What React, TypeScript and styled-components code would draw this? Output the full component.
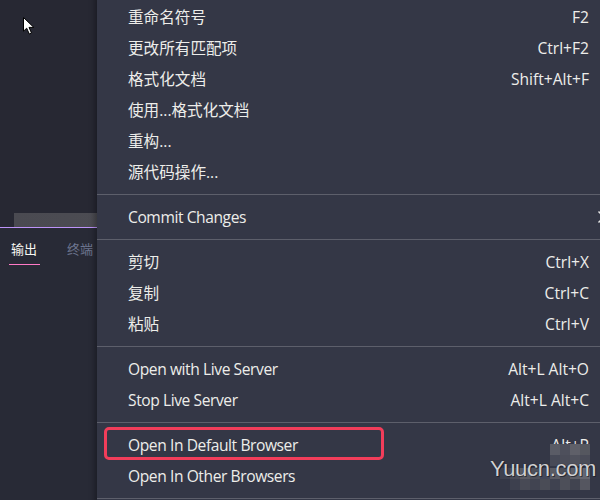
import React from "react";
import styled, { createGlobalStyle } from "styled-components";

const Global = createGlobalStyle`
  html, body { margin: 0; padding: 0; background: #282a36; }
  body { width: 600px; height: 500px; overflow: hidden; }
  * { box-sizing: border-box; }
`;

const Page = styled.div`
  position: relative;
  width: 600px;
  height: 500px;
  overflow: hidden;
  background: #282a36;
  font-family: "Open Sans", "Noto Sans CJK SC", sans-serif;
`;

const Workbench = styled.div`
  display: flex;
  flex-direction: column;
  height: 100%;
`;

const Editor = styled.div`
  height: 227px;
  background: #272833;
  display: flex;
  flex-direction: column;
  justify-content: flex-end;
  padding-left: 14px;
`;

const HScrollbar = styled.div`
  height: 14px;
  background: linear-gradient(90deg, #4a4a51 0%, #525258 70%, #4b4b52 100%);
`;

const PanelBox = styled.div`
  flex: 1;
  border-top: 1px solid #bd93f9;
  background: #282a36;
`;

const TabBar = styled.div`
  display: flex;
  gap: 25px;
  padding-left: 9px;
  height: 37px;
`;

const Tab = styled.div<{ $active?: boolean }>`
  display: flex;
  align-items: center;
  padding: 4px 3px 0 2px;
  font-size: 13px;
  font-family: "Noto Sans CJK SC", sans-serif;
  color: ${(p) => (p.$active ? "#f8f8f2" : "#6e7690")};
  border-bottom: 1px solid ${(p) => (p.$active ? "#ff79c6" : "transparent")};
`;

const Menu = styled.div`
  position: absolute;
  left: 97px;
  top: -4px;
  width: 530px;
  padding: 6px 0;
  background: #343746;
  box-shadow: -2px 0 6px rgba(0, 0, 0, 0.35);
`;

const Item = styled.div`
  display: grid;
  grid-template-columns: 1fr auto 38px;
  align-items: center;
  height: 31px;
  padding-left: 31px;
  padding-bottom: 2px;
  font-size: 15.6px;
  color: #ededea;
  white-space: nowrap;
`;

const Label = styled.span<{ $latin?: boolean }>`
  letter-spacing: ${(p) => (p.$latin ? "-0.42px" : "0")};
`;

const Keys = styled.span`
  text-align: right;
`;

const SubArrow = styled.span`
  display: flex;
  align-items: center;
  padding-left: 8px;
`;

const Separator = styled.div`
  height: 14px;
  padding-top: 6px;
  &::after {
    content: "";
    display: block;
    width: 100%;
    height: 1px;
    background: #5d5f6b;
  }
`;

const Highlight = styled.div`
  position: absolute;
  left: 104px;
  top: 427px;
  width: 280px;
  height: 33px;
  border: 3px solid #f23d5a;
  border-radius: 5px;
`;

const Cursor = styled.svg`
  position: absolute;
  left: 22px;
  top: 16px;
`;

const Watermark = styled.div`
  position: absolute;
  left: 488px;
  top: 440px;
  width: 112px;
  height: 50px;
`;

const Cell = styled.div`
  position: absolute;
  width: 10px;
  height: 11px;
`;

const MarkText = styled.div`
  position: absolute;
  left: 2px;
  top: 17px;
  font-family: "Liberation Sans", Arial, sans-serif;
  font-size: 22px;
  line-height: 24px;
  color: #d0d0d2;
  text-shadow: 0 0 1px #1a1b22, 1px 1px 0 rgba(20, 20, 28, 0.6);
  letter-spacing: -0.3px;
`;

type Row =
  | { kind: "item"; label: string; keys?: string; sub?: boolean; latin?: boolean }
  | { kind: "sep" };

const rows: Row[] = [
  { kind: "item", label: "重命名符号", keys: "F2" },
  { kind: "item", label: "更改所有匹配项", keys: "Ctrl+F2" },
  { kind: "item", label: "格式化文档", keys: "Shift+Alt+F" },
  { kind: "item", label: "使用...格式化文档" },
  { kind: "item", label: "重构..." },
  { kind: "item", label: "源代码操作..." },
  { kind: "sep" },
  { kind: "item", label: "Commit Changes", sub: true, latin: true },
  { kind: "sep" },
  { kind: "item", label: "剪切", keys: "Ctrl+X" },
  { kind: "item", label: "复制", keys: "Ctrl+C" },
  { kind: "item", label: "粘贴", keys: "Ctrl+V" },
  { kind: "sep" },
  { kind: "item", label: "Open with Live Server", keys: "Alt+L Alt+O", latin: true },
  { kind: "item", label: "Stop Live Server", keys: "Alt+L Alt+C", latin: true },
  { kind: "sep" },
  { kind: "item", label: "Open In Default Browser", keys: "Alt+P", latin: true },
  { kind: "item", label: "Open In Other Browsers", latin: true },
  { kind: "sep" },
];

// mosaic cells of the watermark: [x, y, colour]
const cells: [number, number, string][] = [
  [62, 4, "#5a5c66"], [72, 4, "#4e505c"], [82, 4, "#5f6069"], [92, 4, "#55575f"],
  [62, 15, "#474a57"], [72, 15, "#4b4d59"], [82, 15, "#50525d"], [92, 15, "#4a4c58"],
  [12, 28, "#3f4250"], [22, 28, "#4a4c57"], [32, 28, "#5a5b62"], [42, 28, "#4e505a"],
  [52, 28, "#44475a"], [62, 28, "#5a5b63"], [72, 28, "#4c4e58"], [82, 28, "#5d5e66"],
  [92, 28, "#666770"],
  [22, 39, "#3d404e"], [32, 39, "#484a55"], [42, 39, "#414451"], [52, 39, "#4a4c56"],
  [62, 39, "#3f4250"], [72, 39, "#4d4f59"], [82, 39, "#414450"], [92, 39, "#555660"],
];

export default function App() {
  return (
    <>
      <Global />
      <Page>
        <Workbench>
          <Editor>
            <HScrollbar />
          </Editor>
          <PanelBox>
            <TabBar>
              <Tab $active>输出</Tab>
              <Tab>终端</Tab>
            </TabBar>
          </PanelBox>
        </Workbench>

        <Cursor width="14" height="20" viewBox="0 0 14 20">
          <path
            d="M1.5 1.5 V15.2 L4.7 12.2 L7.3 18 L9.5 17 L7 11.4 L11.8 11.4 Z"
            fill="#ffffff"
            stroke="#000000"
            strokeWidth="1"
            strokeLinejoin="miter"
          />
        </Cursor>

        <Menu>
          {rows.map((r, i) =>
            r.kind === "sep" ? (
              <Separator key={i} />
            ) : (
              <Item key={i}>
                <Label $latin={r.latin}>{r.label}</Label>
                <Keys>{r.keys ?? ""}</Keys>
                <SubArrow>
                  {r.sub ? (
                    <svg width="9" height="14" viewBox="0 0 9 14">
                      <path d="M1.5 1.5 L7 7 L1.5 12.5" fill="none" stroke="#e6e6e6" strokeWidth="1.5" />
                    </svg>
                  ) : null}
                </SubArrow>
              </Item>
            )
          )}
        </Menu>

        <Highlight />

        <Watermark>
          {cells.map(([x, y, c], i) => (
            <Cell key={i} style={{ left: x, top: y, background: c }} />
          ))}
          <MarkText>Yuucn.com</MarkText>
        </Watermark>
      </Page>
    </>
  );
}
